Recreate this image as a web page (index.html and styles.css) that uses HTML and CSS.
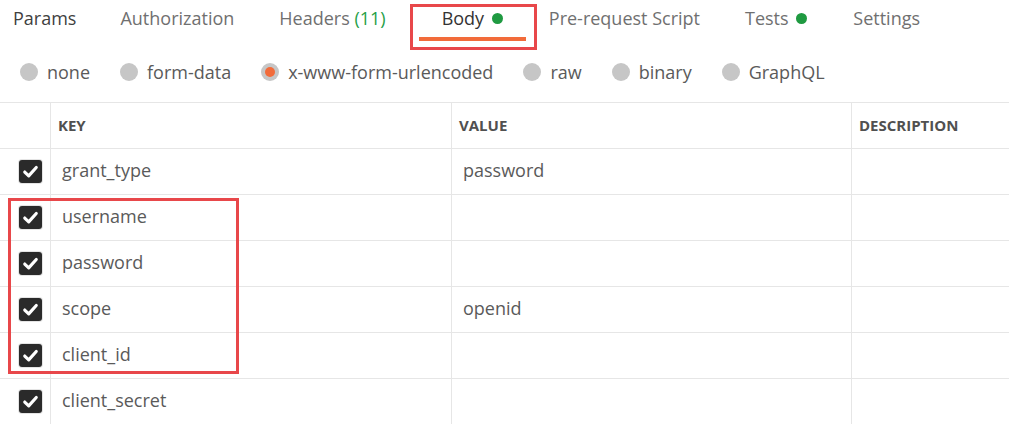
FILE: index.html
```html
<!DOCTYPE html>
<html>
<head>
<meta charset="utf-8">
<link rel="stylesheet" href="styles.css">
</head>
<body>
<div class="page">
  <div class="tabs">
    <div class="tab tab-first tab-dark">Params</div>
    <div class="tab tab-auth">Authorization</div>
    <div class="tab">Headers <span class="count">(11)</span></div>
    <div class="tab tab-active">Body <span class="dot"></span></div>
    <div class="tab tab-pre">Pre-request Script</div>
    <div class="tab">Tests <span class="dot"></span></div>
    <div class="tab">Settings</div>
  </div>
  <div class="radios">
    <div class="radio"><span class="circle"></span>none</div>
    <div class="radio"><span class="circle"></span>form-data</div>
    <div class="radio"><span class="circle circle-on"></span>x-www-form-urlencoded</div>
    <div class="radio"><span class="circle"></span>raw</div>
    <div class="radio"><span class="circle"></span>binary</div>
    <div class="radio"><span class="circle"></span>GraphQL</div>
  </div>
  <div class="table">
    <div class="cell head"></div>
    <div class="cell head col">KEY</div>
    <div class="cell head col">VALUE</div>
    <div class="cell head col">DESCRIPTION</div>

    <div class="cell chk"><span class="box"><svg viewBox="0 0 22 22"><path d="M5.5 11.5 L9.3 15.2 L16.5 7.2" /></svg></span></div>
    <div class="cell col txt">grant_type</div>
    <div class="cell col txt">password</div>
    <div class="cell col"></div>

    <div class="cell chk"><span class="box"><svg viewBox="0 0 22 22"><path d="M5.5 11.5 L9.3 15.2 L16.5 7.2" /></svg></span></div>
    <div class="cell col txt">username</div>
    <div class="cell col txt"></div>
    <div class="cell col"></div>

    <div class="cell chk"><span class="box"><svg viewBox="0 0 22 22"><path d="M5.5 11.5 L9.3 15.2 L16.5 7.2" /></svg></span></div>
    <div class="cell col txt">password</div>
    <div class="cell col txt"></div>
    <div class="cell col"></div>

    <div class="cell chk"><span class="box"><svg viewBox="0 0 22 22"><path d="M5.5 11.5 L9.3 15.2 L16.5 7.2" /></svg></span></div>
    <div class="cell col txt">scope</div>
    <div class="cell col txt">openid</div>
    <div class="cell col"></div>

    <div class="cell chk"><span class="box"><svg viewBox="0 0 22 22"><path d="M5.5 11.5 L9.3 15.2 L16.5 7.2" /></svg></span></div>
    <div class="cell col txt">client_id</div>
    <div class="cell col txt"></div>
    <div class="cell col"></div>

    <div class="cell chk"><span class="box"><svg viewBox="0 0 22 22"><path d="M5.5 11.5 L9.3 15.2 L16.5 7.2" /></svg></span></div>
    <div class="cell col txt">client_secret</div>
    <div class="cell col txt"></div>
    <div class="cell col"></div>
  </div>
  <div class="mark mark-tab"></div>
  <div class="mark mark-rows"></div>
</div>
</body>
</html>
```

FILE: styles.css
```css
html, body {
  margin: 0;
  padding: 0;
  background: #ffffff;
}
body {
  font-family: "Open Sans", "Liberation Sans", sans-serif;
  width: 1009px;
  height: 424px;
  overflow: hidden;
}
.page {
  position: relative;
  width: 1009px;
  height: 424px;
}
.tabs {
  display: flex;
  height: 41px;
}
.tab {
  box-sizing: border-box;
  height: 41px;
  padding: 0 23px 6px;
  display: flex;
  align-items: center;
  font-size: 18px;
  color: #707070;
  white-space: pre;
}
.tab-first {
  padding-left: 13px;
  padding-right: 21px;
}
.tab-auth {
  padding-right: 22px;
}
.tab-pre {
  padding-right: 22px;
}
.tab-dark {
  color: #404040;
}
.tab-active {
  color: #333333;
  margin-left: 10px;
  padding-bottom: 2px;
  border-bottom: 4px solid #f26b3a;
}
.count {
  color: #26a047;
}
.dot {
  display: inline-block;
  width: 11px;
  height: 11px;
  border-radius: 50%;
  background: #1f9a41;
  margin-left: 3px;
  margin-top: 2px;
}
.radios {
  display: flex;
  align-items: center;
  height: 61px;
  padding-left: 20px;
  gap: 30px;
}
.radio {
  display: flex;
  align-items: center;
  font-size: 18px;
  color: #5a5a5a;
}
.circle {
  width: 18px;
  height: 18px;
  border-radius: 50%;
  background: #c6c6c6;
  margin-right: 9px;
  display: flex;
  align-items: center;
  justify-content: center;
}
.circle-on::after {
  content: "";
  width: 10px;
  height: 10px;
  border-radius: 50%;
  background: #f26b3a;
}
.table {
  display: grid;
  grid-template-columns: 50px 401px 400px 1fr;
  grid-auto-rows: 46px;
  border-top: 1px solid #e6e6e6;
}
.cell {
  box-sizing: border-box;
  border-bottom: 1px solid #e6e6e6;
  display: flex;
  align-items: center;
}
.col {
  border-left: 1px solid #e6e6e6;
}
.head {
  font-size: 15px;
  font-weight: 700;
  color: #505050;
  padding-left: 7px;
  padding-bottom: 1px;
}
.head:first-child {
  padding-left: 0;
}
.txt {
  font-size: 18px;
  color: #5a5a5a;
  padding-left: 11px;
  padding-bottom: 3px;
}
.chk {
  padding-left: 19px;
}
.box {
  width: 23px;
  height: 23px;
  border-radius: 3px;
  background: #2a2a2a;
  box-shadow: 0 0 0 1px #e4e4e4;
  display: flex;
}
.box svg {
  width: 23px;
  height: 23px;
}
.box path {
  fill: none;
  stroke: #ffffff;
  stroke-width: 3;
  stroke-linecap: round;
  stroke-linejoin: round;
}
.mark {
  position: absolute;
  box-sizing: border-box;
  border: 3px solid #e8474a;
}
.mark-tab {
  left: 410px;
  top: 4px;
  width: 127px;
  height: 46px;
}
.mark-rows {
  left: 8px;
  top: 198px;
  width: 231px;
  height: 176px;
}
```
